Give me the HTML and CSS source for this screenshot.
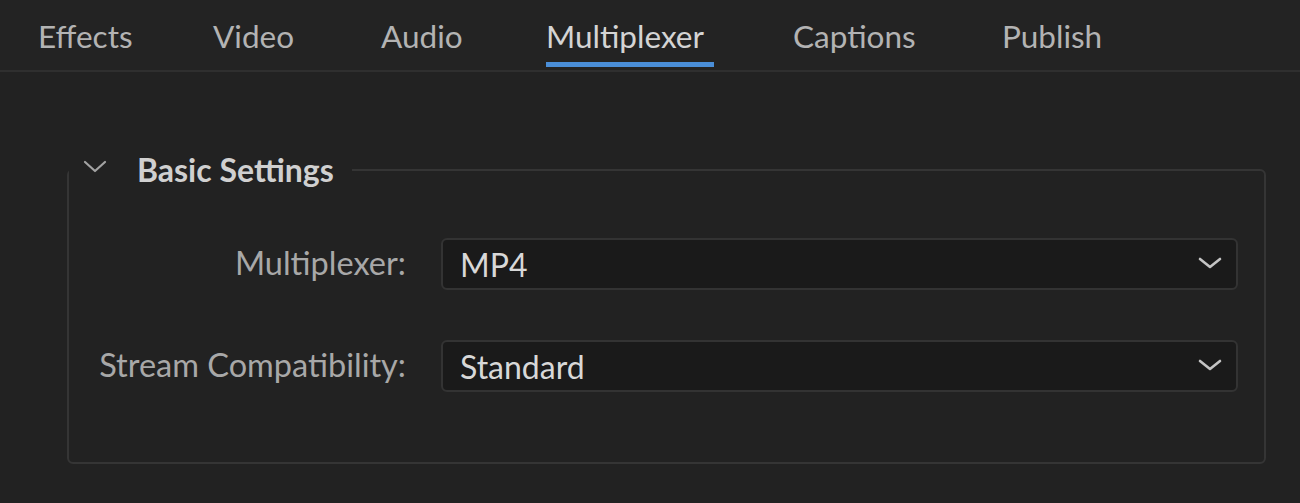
FILE: index.html
```html
<!DOCTYPE html>
<html lang="en">
<head>
<meta charset="utf-8">
<title>Export Settings - Multiplexer</title>
<link rel="stylesheet" href="styles.css">
</head>
<body>
<div class="panel">
  <nav class="tabs">
    <div class="tab"><span class="tab-label">Effects</span></div>
    <div class="tab"><span class="tab-label">Video</span></div>
    <div class="tab"><span class="tab-label">Audio</span></div>
    <div class="tab active"><span class="tab-label">Multiplexer</span></div>
    <div class="tab"><span class="tab-label">Captions</span></div>
    <div class="tab"><span class="tab-label">Publish</span></div>
  </nav>
  <div class="content">
    <fieldset class="group">
      <legend class="group-title">
        <svg class="twisty" width="24" height="13" viewBox="0 0 24 13"><polyline points="2,2 12,11 22,2" fill="none" stroke="currentColor" stroke-width="2.2" stroke-linecap="round" stroke-linejoin="round"/></svg>
        <span class="group-text">Basic Settings</span>
      </legend>
      <div class="rows">
        <label class="row-label">Multiplexer:</label>
        <div class="select">
          <span class="select-value">MP4</span>
          <svg class="select-arrow" width="24" height="12" viewBox="0 0 24 12"><polyline points="2,2 12,10 22,2" fill="none" stroke="currentColor" stroke-width="2.6" stroke-linecap="round" stroke-linejoin="round"/></svg>
        </div>
        <label class="row-label">Stream Compatibility:</label>
        <div class="select">
          <span class="select-value">Standard</span>
          <svg class="select-arrow" width="24" height="12" viewBox="0 0 24 12"><polyline points="2,2 12,10 22,2" fill="none" stroke="currentColor" stroke-width="2.6" stroke-linecap="round" stroke-linejoin="round"/></svg>
        </div>
      </div>
    </fieldset>
  </div>
</div>
</body>
</html>
```
FILE: styles.css
```css
html, body {
  margin: 0;
  padding: 0;
  background: #222222;
}
body {
  font-family: Lato, "Open Sans", sans-serif;
  width: 1300px;
  height: 503px;
  overflow: hidden;
}
.panel {
  display: flex;
  flex-direction: column;
}
.tabs {
  display: grid;
  grid-template-columns: 175px 168px 165px 247px 209px auto;
  padding-left: 38px;
  height: 70px;
  border-bottom: 2px solid #2f2f2f;
  background: #232323;
}
.tab {
  padding-top: 17px;
}
.tab-label {
  display: inline-block;
  font-size: 31.5px;
  line-height: 38px;
  color: #b3b3b3;
  padding-bottom: 7px;
  padding-right: 10px;
  border-bottom: 5px solid transparent;
}
.tab.active .tab-label {
  color: #d4d4d4;
  border-bottom-color: #4a8ed8;
}
.content {
  padding: 78px 34px 0 67px;
}
.group {
  margin: 0;
  padding: 0;
  border: 2px solid #353535;
  border-radius: 6px;
  min-width: 0;
}
.group-title {
  padding: 0 18px 0 14px;
  margin: 0;
  line-height: 40px;
  height: 40px;
  display: flex;
  align-items: center;
  color: #d0d0d0;
}
.twisty {
  color: #a3a3a3;
  margin-right: 30px;
  margin-top: -8px;
}
.group-text {
  font-size: 32px;
  font-weight: 700;
}
.rows {
  display: grid;
  grid-template-columns: 337px 1fr;
  column-gap: 35px;
  row-gap: 50px;
  align-items: center;
  padding: 48px 26px 70px 0;
}
.row-label {
  text-align: right;
  font-size: 32.5px;
  color: #a8a8a8;
  margin-top: -3px;
}
.select {
  height: 48px;
  border: 2px solid #333333;
  border-radius: 6px;
  background: #1a1a1a;
  display: flex;
  align-items: center;
  justify-content: space-between;
  padding: 0 14px 0 17px;
}
.select-value {
  font-size: 32px;
  color: #d8d8d8;
}
.select-arrow {
  color: #c4c4c4;
  margin-top: -2px;
}
```
